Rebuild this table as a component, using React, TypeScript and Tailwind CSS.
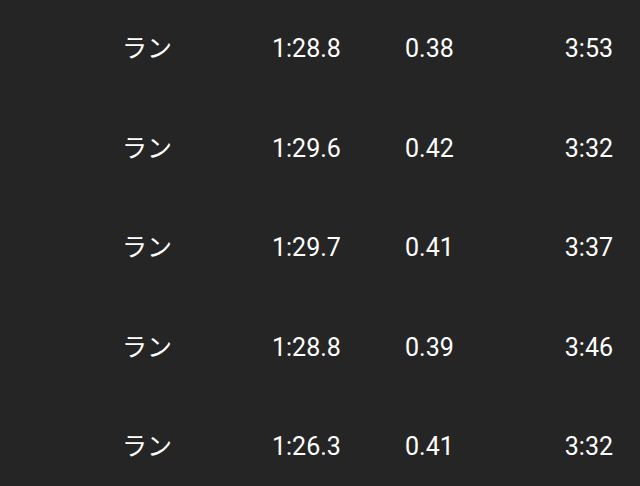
import React from "react";

const rows = [
  { type: "ラン", time: "1:28.8", dist: "0.38", pace: "3:53" },
  { type: "ラン", time: "1:29.6", dist: "0.42", pace: "3:32" },
  { type: "ラン", time: "1:29.7", dist: "0.41", pace: "3:37" },
  { type: "ラン", time: "1:28.8", dist: "0.39", pace: "3:46" },
  { type: "ラン", time: "1:26.3", dist: "0.41", pace: "3:32" },
];

export default function App() {
  return (
    <div
      className="w-[640px] h-[486px] overflow-hidden bg-[#252525] text-white"
      style={{ fontFamily: 'Roboto, "Noto Sans CJK JP", sans-serif' }}
    >
      <div className="flex flex-col gap-[70.5px] pt-[34px] pl-[122px] pr-[27px]">
        {rows.map((r, i) => (
          <div key={i} className="grid grid-cols-[150px_133px_1fr_auto] text-[25px] leading-[29px]">
            <span>{r.type}</span>
            <span>{r.time}</span>
            <span>{r.dist}</span>
            <span className="text-right">{r.pace}</span>
          </div>
        ))}
      </div>
    </div>
  );
}
